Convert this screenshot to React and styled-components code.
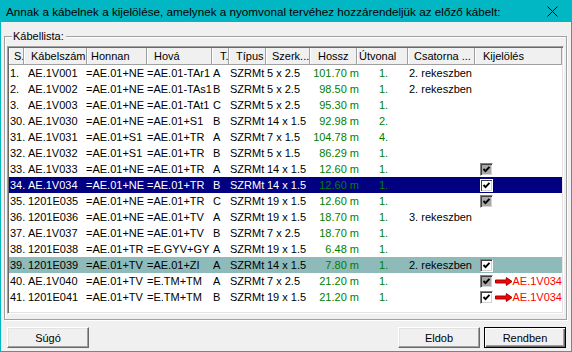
import React from 'react'
import styled, { createGlobalStyle } from 'styled-components'

const GlobalStyle = createGlobalStyle`
  html, body {
    margin: 0;
    padding: 0;
    background: #f0f0f0;
  }
  body {
    font-family: "Liberation Sans", Arial, sans-serif;
    font-size: 11px;
    color: #000;
  }
`

const headCols = [
  { label: 'S.', w: 15, pad: 5 },
  { label: 'Kábelszám', w: 63, pad: 7 },
  { label: 'Honnan', w: 60, pad: 4 },
  { label: 'Hová', w: 65, pad: 7 },
  { label: 'T.', w: 17, pad: 8 },
  { label: 'Típus', w: 37, pad: 7 },
  { label: 'Szerk...', w: 44, pad: 6 },
  { label: 'Hossz', w: 47, pad: 8 },
  { label: 'Útvonal', w: 51, pad: 2 },
  { label: 'Csatorna ...', w: 67, pad: 6 },
  { label: 'Kijelölés', w: 87, pad: 8 },
]

// data columns are drawn slightly offset from the header columns
const W = [19, 58, 61, 66, 17, 37, 44, 50, 48, 71, 82]

const rows = [
  ['1.', 'AE.1V001', '=AE.01+NE', '=AE.01-TAr1', 'A', '5 x 2.5', '101.70 m', '1.', '2. rekeszben'],
  ['2.', 'AE.1V002', '=AE.01+NE', '=AE.01-TAs1', 'B', '5 x 2.5', '98.50 m', '1.', '2. rekeszben'],
  ['3.', 'AE.1V003', '=AE.01+NE', '=AE.01-TAt1', 'C', '5 x 2.5', '95.30 m', '1.', ''],
  ['30.', 'AE.1V030', '=AE.01+NE', '=AE.01+S1', 'B', '14 x 1.5', '92.98 m', '2.', ''],
  ['31.', 'AE.1V031', '=AE.01+S1', '=AE.01+TR', 'A', '7 x 1.5', '104.78 m', '4.', ''],
  ['32.', 'AE.1V032', '=AE.01+S1', '=AE.01+TR', 'B', '5 x 1.5', '86.29 m', '1.', ''],
  ['33.', 'AE.1V033', '=AE.01+NE', '=AE.01+TR', 'A', '14 x 1.5', '12.60 m', '1.', '', 'gray'],
  ['34.', 'AE.1V034', '=AE.01+NE', '=AE.01+TR', 'B', '14 x 1.5', '12.60 m', '1.', '', 'white', false, 'selected'],
  ['35.', '1201E035', '=AE.01+NE', '=AE.01+TR', 'C', '19 x 1.5', '12.60 m', '1.', '', 'gray'],
  ['36.', '1201E036', '=AE.01+NE', '=AE.01+TV', 'A', '19 x 1.5', '18.70 m', '1.', '3. rekeszben'],
  ['37.', 'AE.1V037', '=AE.01+NE', '=AE.01+TV', 'B', '7 x 2.5', '18.70 m', '1.', ''],
  ['38.', '1201E038', '=AE.01+TR', '=E.GYV+GY', 'A', '19 x 1.5', '6.48 m', '1.', ''],
  ['39.', '1201E039', '=AE.01+TV', '=AE.01+ZI', 'A', '14 x 1.5', '7.80 m', '1.', '2. rekeszben', 'white', false, 'marked'],
  ['40.', 'AE.1V040', '=AE.01+TV', '=E.TM+TM', 'A', '7 x 2.5', '21.20 m', '1.', '', 'gray', true],
  ['41.', '1201E041', '=AE.01+TV', '=E.TM+TM', 'B', '19 x 1.5', '21.20 m', '1.', '', 'white', true],
]

const CheckMark = () => (
  <svg width="9" height="9" viewBox="0 0 9 9">
    <polyline points="1.5,4 3.5,6.2 7.5,1.8" fill="none" stroke="#000" strokeWidth="1.9" />
  </svg>
)

const RedArrow = () => (
  <svg width="18" height="9" viewBox="0 0 18 9">
    <polygon
      points="0.5,3 11.5,3 11.5,0.5 17.5,4.5 11.5,8.5 11.5,6 0.5,6"
      fill="#ff0000"
      stroke="#9a0000"
      strokeWidth="1"
    />
  </svg>
)

const App = () => (
  <Window>
    <GlobalStyle />
    <TitleBar>
      <Title>Annak a kábelnek a kijelölése, amelynek a nyomvonal tervéhez hozzárendeljük az előző kábelt:</Title>
      <svg width="11" height="11" viewBox="0 0 11 11">
        <path d="M0.5 0.5 L10.5 10.5 M10.5 0.5 L0.5 10.5" stroke="#000" strokeWidth="1" />
      </svg>
    </TitleBar>
    <Body>
      <Group>
        <Legend>Kábellista:</Legend>
        <List>
          <Header>
            {headCols.map((c) => (
              <HeadCell key={c.label} $w={c.w} $pad={c.pad}>
                {c.label}
              </HeadCell>
            ))}
          </Header>
          {rows.map((r) => {
            const [no, code, from, to, t, szerk, hossz, ut, csat, check, arrow, variant] = r
            return (
              <Row key={no} $variant={variant}>
                <Cell $w={W[0]} $pad={1}>{no}</Cell>
                <Cell $w={W[1]}>{code}</Cell>
                <Cell $w={W[2]}>{from}</Cell>
                <Cell $w={W[3]}>{to}</Cell>
                <Cell $w={W[4]}>{t}</Cell>
                <Cell $w={W[5]}>SZRMt</Cell>
                <Cell $w={W[6]}>{szerk}</Cell>
                <Cell $w={W[7]} $right $green>{hossz}</Cell>
                <Cell $w={W[8]} $pad={18} $green>{ut}</Cell>
                <Cell $w={W[9]}>{csat}</Cell>
                <MarkCell $w={W[10]}>
                  {check && (
                    <CheckBox $gray={check === 'gray'} $onDark={variant === 'selected'}>
                      <CheckMark />
                    </CheckBox>
                  )}
                  {arrow && (
                    <>
                      <RedArrow />
                      <RefText>AE.1V034</RefText>
                    </>
                  )}
                </MarkCell>
              </Row>
            )
          })}
        </List>
      </Group>
      <Footer>
        <Button>Súgó</Button>
        <Spacer />
        <Button>Eldob</Button>
        <Button $default>Rendben</Button>
      </Footer>
    </Body>
  </Window>
)

const Window = styled.div`
  width: 572px;
  height: 352px;
  box-sizing: border-box;
  border: 1px solid #00b7c3;
  border-top: 0;
  background: #f0f0f0;
  display: flex;
  flex-direction: column;
`

const TitleBar = styled.div`
  height: 22px;
  margin: 0 -1px;
  background: #00b7c3;
  display: flex;
  align-items: center;
  justify-content: space-between;
  padding: 1px 14px 0 6px;
  box-sizing: border-box;
`

const Title = styled.span`
  font-size: 11.7px;
  white-space: nowrap;
`

const Body = styled.div`
  flex: 1;
  display: flex;
  flex-direction: column;
  padding: 8px 5px 0 3px;
`

const Group = styled.fieldset`
  margin: 0;
  padding: 3px 2px 5px 2px;
  width: 563px;
  height: 290px;
  box-sizing: border-box;
  border: 1px solid #a0a0a0;
  box-shadow: inset 1px 1px 0 #fff, 1px 1px 0 #fff;
  min-width: 0;
`

const Legend = styled.legend`
  padding: 0 2px 0 1px;
  margin-left: 5px;
  line-height: 13px;
  background: #f0f0f0;
`

const List = styled.div`
  height: 268px;
  box-sizing: border-box;
  background: #fff;
  border: 1px solid;
  border-color: #a0a0a0 #fff #fff #a0a0a0;
  box-shadow: inset 1px 1px 0 #696969, inset -1px -1px 0 #e3e3e3;
  padding: 1px;
  overflow: hidden;
`

const Header = styled.div`
  display: flex;
  height: 17px;
  box-sizing: border-box;
  background: #f0f0f0;
  border-bottom: 1px solid #a0a0a0;
  line-height: 16px;
`

const HeadCell = styled.div`
  width: ${(p) => p.$w}px;
  flex: none;
  box-sizing: border-box;
  padding-left: ${(p) => p.$pad}px;
  border-right: 1px solid #a0a0a0;
  box-shadow: inset 1px 0 0 #fff;
  white-space: nowrap;
  overflow: hidden;
`

const Row = styled.div`
  display: flex;
  height: 16px;
  line-height: 16px;
  background: ${(p) =>
    p.$variant === 'selected' ? '#000080' : p.$variant === 'marked' ? '#8fbaba' : 'transparent'};
  color: ${(p) => (p.$variant === 'selected' ? '#fff' : '#000')};
`

const Cell = styled.div`
  width: ${(p) => p.$w}px;
  flex: none;
  box-sizing: border-box;
  padding-left: ${(p) => p.$pad || 0}px;
  padding-right: ${(p) => (p.$right ? 2 : 0)}px;
  text-align: ${(p) => (p.$right ? 'right' : 'left')};
  white-space: nowrap;
  overflow: hidden;
  color: ${(p) => (p.$green ? '#008000' : 'inherit')};
`

const MarkCell = styled.div`
  width: ${(p) => p.$w}px;
  flex: none;
  display: flex;
  align-items: center;
  overflow: hidden;
  white-space: nowrap;
`

const CheckBox = styled.span`
  width: 13px;
  height: 13px;
  box-sizing: border-box;
  margin-right: 2px;
  display: flex;
  align-items: center;
  justify-content: center;
  background: ${(p) => (p.$gray ? '#a8a8a8' : '#fff')};
  border: 1px solid;
  border-color: ${(p) => (p.$onDark ? '#fff' : '#808080 #fff #fff #808080')};
  box-shadow: inset 1px 1px 0 #404040, inset -1px -1px 0 #d4d4d4;
`

const RefText = styled.span`
  color: #ff0000;
`

const Footer = styled.div`
  display: flex;
  align-items: center;
  gap: 4px;
  margin-top: 7px;
  padding: 0 0 0 3px;
`

const Spacer = styled.div`
  flex: 1;
`

const Button = styled.button`
  width: 82px;
  height: 21px;
  padding: 0;
  font: inherit;
  color: #000;
  background: #f0f0f0;
  border: 1px solid;
  border-color: ${(p) => (p.$default ? '#000' : '#fff #696969 #696969 #fff')};
  box-shadow: ${(p) =>
    p.$default
      ? 'inset 1px 1px 0 #fff, inset -1px -1px 0 #696969, inset -2px -2px 0 #a0a0a0'
      : 'inset -1px -1px 0 #a0a0a0, inset 1px 1px 0 #e3e3e3'};
`

export default App
